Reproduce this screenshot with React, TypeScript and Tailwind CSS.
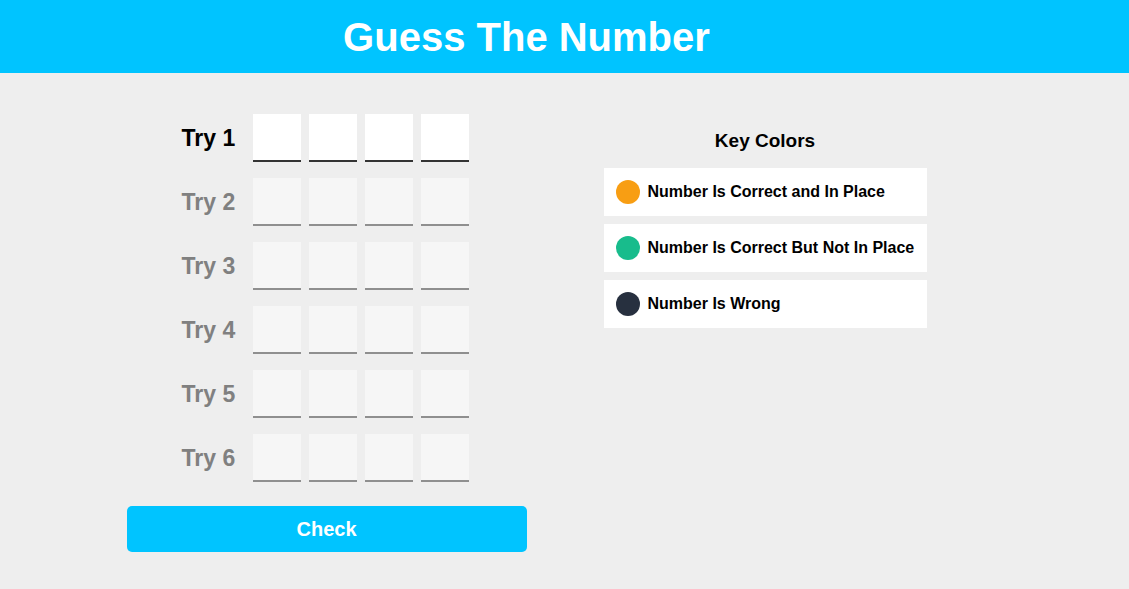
import React from "react"

const tries = [1, 2, 3, 4, 5, 6]

const keyColors = [
  { label: "Number Is Correct and In Place", color: "bg-[#f89e13]" },
  { label: "Number Is Correct But Not In Place", color: "bg-[#18bc8c]" },
  { label: "Number Is Wrong", color: "bg-[#27303f]" },
]

function TryRow({ n }: { n: number }) {
  const active = n === 1
  return (
    <div className="flex items-center">
      <span
        className={`w-[55px] text-[23px] font-bold leading-none ${active ? "text-black" : "text-[#808080]"}`}
      >
        Try {n}
      </span>
      <div className="ml-4 flex gap-2">
        {[0, 1, 2, 3].map((i) => (
          <div
            key={i}
            className={
              active
                ? "h-12 w-12 border-b-2 border-[#333] bg-white"
                : "h-12 w-12 border-b-2 border-[#8f8f8f] bg-[#f6f6f6]"
            }
          />
        ))}
      </div>
    </div>
  )
}

export default function App() {
  return (
    <div className="min-h-[589px] bg-[#eeeeee] font-['Liberation_Sans',Arial,sans-serif]">
      <header className="flex h-[73px] items-center justify-center bg-[#00c4ff] pr-[76px]">
        <h1 className="text-[40px] font-bold text-white">Guess The Number</h1>
      </header>

      <div className="flex justify-center pr-[76px] pt-[41px]">
        <div className="flex w-[800px] gap-[77px]">
          <div className="flex w-[400px] flex-col">
            <div className="flex flex-col gap-4 pl-[55px]">
              {tries.map((n) => (
                <TryRow key={n} n={n} />
              ))}
            </div>
            <button className="mt-6 h-[46px] w-full rounded-[5px] bg-[#00c4ff] text-[20px] font-bold text-white">
              Check
            </button>
          </div>

          <div className="flex w-[323px] flex-col">
            <h2 className="mt-[17px] text-center text-[19px] font-bold leading-none text-black">Key Colors</h2>
            <div className="mt-[18px] flex flex-col gap-2">
              {keyColors.map((k) => (
                <div key={k.label} className="flex h-12 items-center gap-2 bg-white pl-3">
                  <span className={`h-6 w-6 rounded-full ${k.color}`} />
                  <span className="text-[16px] font-bold text-black">{k.label}</span>
                </div>
              ))}
            </div>
          </div>
        </div>
      </div>
    </div>
  )
}
